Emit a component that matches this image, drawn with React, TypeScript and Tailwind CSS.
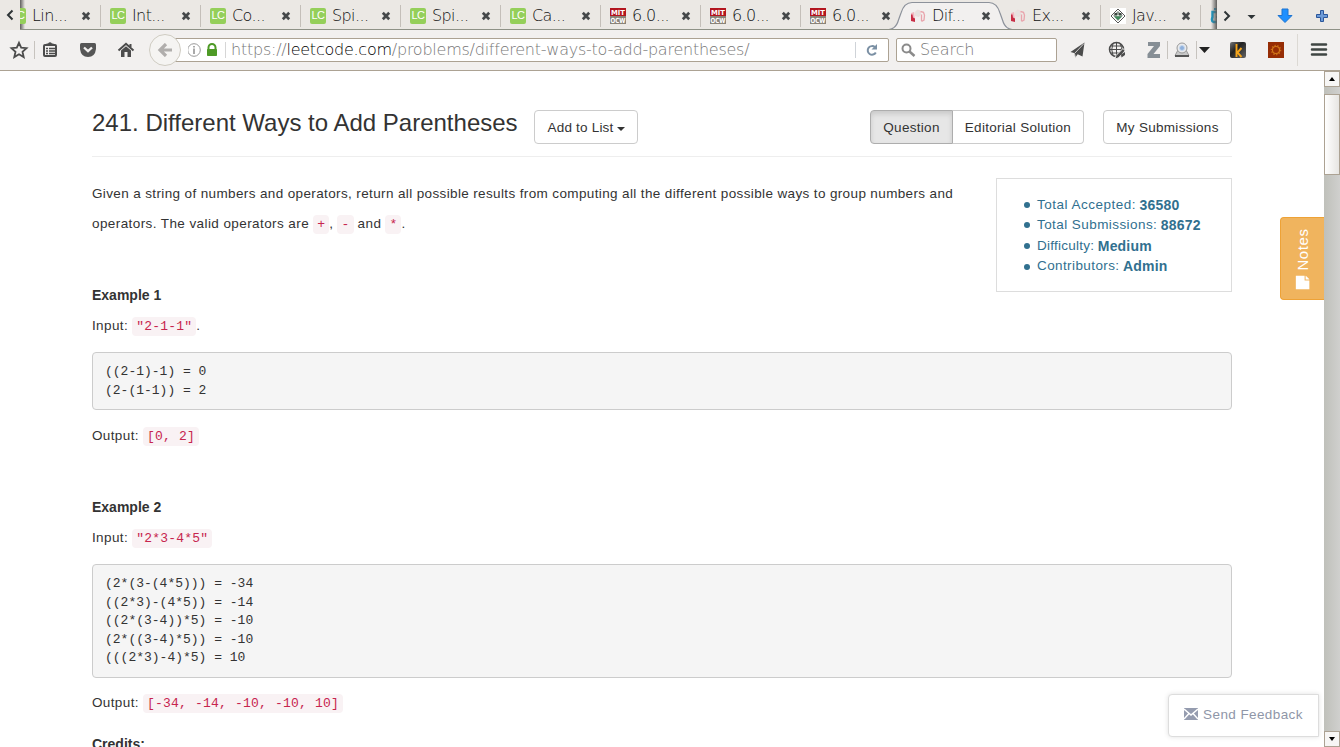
import type { ReactNode } from "react";

type TabKind = "lc" | "mit" | "page" | "java";

const tabs: { kind: TabKind; label: string; active?: boolean; plain?: boolean }[] = [
  { kind: "lc", label: "Lin..." },
  { kind: "lc", label: "Int..." },
  { kind: "lc", label: "Co..." },
  { kind: "lc", label: "Spi..." },
  { kind: "lc", label: "Spi..." },
  { kind: "lc", label: "Ca..." },
  { kind: "mit", label: "6.0..." },
  { kind: "mit", label: "6.0..." },
  { kind: "mit", label: "6.0...", plain: true },
  { kind: "page", label: "Dif...", active: true, plain: true },
  { kind: "page", label: "Ex..." },
  { kind: "java", label: "Jav..." },
];

function Favicon({ kind }: { kind: TabKind }) {
  if (kind === "lc")
    return (
      <span className="flex size-4 shrink-0 items-center justify-center rounded-[2px] bg-[#95cf5a] font-['Liberation_Sans'] text-[11px] leading-none tracking-[-0.5px] text-white">
        LC
      </span>
    );
  if (kind === "mit")
    return (
      <svg className="size-4 shrink-0 overflow-visible font-['DejaVu_Sans'] text-[7px] font-bold tracking-normal" viewBox="0 0 16 16" fill="#fff">
        <path fill="#b3161f" d="M0 0h16v8H0z" />
        <path fill="#8a8378" d="M0 8h16v8H0z" />
        <text x="1" y="6.600" textLength="14" lengthAdjust="spacingAndGlyphs">MIT</text>
        <text x="0.500" y="14.600" textLength="15" lengthAdjust="spacingAndGlyphs">OCW</text>
      </svg>
    );
  if (kind === "page")
    return (
      <svg className="size-4 shrink-0" viewBox="0 0 16 16" fill="none">
        <path d="M1 5l3-1 1 9-3-.5L1 9z" fill="#f0b8c0" />
        <path d="M1 6.500l1.500 0 .5 3 2 1V14l-4-1z" fill="#c92d45" />
        <path d="M5 4.500L7.500 2l2.500 1 .5 3.500-1.500 2-4-1z" fill="#e6e2df" stroke="#eddcdc" />
        <path d="M10.500 3.500l3 .8 1 3-.5 4.700-2.500 1.500M11.500 6.500V13" stroke="#e9a4ac" strokeWidth="1.300" />
      </svg>
    );
  return (
    <svg className="size-4 shrink-0" viewBox="0 0 16 16">
      <path fill="#fff" d="M0 0h16v16H0z" />
      <path d="M8 1L15 8 8 15 1 8z" fill="#fff" stroke="#555" />
      <path d="M8 3l4.800 4.500L8 13 3.200 7.500z" fill="#8f9a93" />
      <path d="M4.500 5h2.500v2H4.500zM9 5h2.500v2H9z" fill="#3c4641" />
      <path d="M4 8.500h8L8 12z" fill="#3d8b5b" />
      <path d="M7 7.500h2" stroke="#cfe6d8" strokeWidth="1.200" />
    </svg>
  );
}

function Close() {
  return (
    <svg className="ml-auto size-[10px] shrink-0" viewBox="0 0 10 10">
      <path d="M1.800 1.800l6.400 6.400M8.200 1.800L1.800 8.200" stroke="#45484a" strokeWidth="2.700" />
    </svg>
  );
}

function TabStrip() {
  return (
    <div className="relative flex h-[30px] bg-[#ebe8e4] font-['DejaVu_Sans'] text-[16px] font-extralight text-[#111]">
      <div className="flex w-5 items-center justify-center">
        <svg width="8" height="12" viewBox="0 0 8 12">
          <path d="M6.500 1.500L2 6l4.500 4.500" fill="none" stroke="#2e3436" strokeWidth="2" />
        </svg>
      </div>
      <div className="relative w-[1197px] overflow-hidden border-b border-[#8e9186]">
        <div className="-ml-5 flex h-[29px] w-[1300px]">
          {tabs.map((t, i) => (
            <div key={i} className="relative flex h-[29px] w-[100px] shrink-0 items-center pt-[2px] pr-[9px] pl-[10px]">
              {t.active && (
                <svg className="absolute top-0 -left-[16px]" width="134" height="30" viewBox="0 0 134 30">
                  <path
                    d="M0 30C9 30 12.500 27 14.500 20L17 13C19 6.500 22 2.500 28 2.500H105C111 2.500 114 6.500 116 13L118.500 20C120.500 27 124 30 133 30"
                    fill="#f2f0ef"
                    stroke="#8d929b"
                    strokeWidth="1.200"
                  />
                </svg>
              )}
              <span className="relative z-10 flex w-full items-center">
                <Favicon kind={t.kind} />
                <span className="ml-[6px] leading-5 tracking-[-0.6px]">{t.label}</span>
                <Close />
              </span>
              {!t.plain && <span className="absolute top-[5px] right-[-1px] h-[22px] w-px bg-[#c4bfb9]" />}
            </div>
          ))}
          <div className="pt-[8px] pl-[10px]">
            <svg width="16" height="16" viewBox="0 0 16 16">
              <path d="M2.500 4h11v10h-10q-2.500-1-1-5z" fill="none" stroke="#159bc9" strokeWidth="2.400" />
              <path d="M6 9h3M4 1h4" stroke="#159bc9" strokeWidth="2" />
            </svg>
          </div>
        </div>
        <div className="absolute top-0 left-0 h-[29px] w-[5px] bg-linear-to-r from-[#5f5e5c] to-transparent" />
        <div className="absolute top-0 right-0 h-[29px] w-[6px] bg-linear-to-l from-[#5f5e5c] to-transparent" />
      </div>
      <div className="flex flex-1 items-center border-b border-[#8e9186]">
        <svg width="123" height="28" viewBox="0 0 123 28">
          <path d="M7.500 10.500L12 15l-4.500 4.500" fill="none" stroke="#2e3436" strokeWidth="2" />
          <path d="M30.500 14h8l-4 4z" fill="#2e3436" />
          <path d="M65 8h6v6.500h4l-7 7-7-7h4z" fill="#1f90ff" stroke="#1f74d0" />
          <path d="M103.500 9.500h3v4h4v3h-4v4h-3v-4h-4v-3h4z" fill="#6d9bd8" stroke="#2b569a" strokeLinejoin="round" />
        </svg>
      </div>
    </div>
  );
}

function Toolbar() {
  return (
    <div className="flex h-[41px] items-center border-b border-[#aca293] bg-[#f2f0ef] font-['DejaVu_Sans'] text-[16px] font-extralight">
      <svg width="149" height="40" viewBox="0 0 149 40" className="shrink-0">
        <path d="M19 12.800l2.200 4.900 5.300.5-4 3.600 1.200 5.300-4.700-2.800-4.700 2.800 1.200-5.300-4-3.600 5.300-.5z" fill="none" stroke="#4c4c4c" strokeWidth="1.800" />
        <path d="M34.500 11v18" stroke="#c7c3be" />
        <rect x="44" y="15" width="12" height="11" rx="1" fill="#f2f0ef" stroke="#4c4c4c" strokeWidth="2" />
        <path d="M46.500 15.500v-2H48q2-2.500 4 0h1.500v2z" fill="#4c4c4c" />
        <path d="M46 18.500h2M49 18.500h6M46 21h2M49 21h6M46 23.500h2M49 23.500h6" stroke="#4c4c4c" strokeWidth="1.300" />
        <path d="M81.500 13h13q1.500 0 1.500 1.500V19q-1 8-8 8t-8-8v-4.500q0-1.500 1.500-1.500z" fill="#565656" />
        <path d="M84 17.500l4 3.700 4-3.700" fill="none" stroke="#f2f0ef" strokeWidth="2.300" />
        <path d="M118.500 20.500l7.500-6.700 7.500 6.700M130.500 14v3" fill="none" stroke="#4c4c4c" strokeWidth="2" />
        <path d="M121 20.500l5-4.300 5 4.300V27h-3.500v-5h-3v5H121z" fill="#4c4c4c" />
      </svg>
      <div className="relative z-10 flex size-8 shrink-0 items-center justify-center rounded-full border border-[#cfccc2] bg-[#f5f4f2]">
        <svg width="16" height="14" viewBox="0 0 16 14">
          <path d="M9 1L3 7l6 6M3.500 7H15" fill="none" stroke="#b0aeac" strokeWidth="3.200" />
        </svg>
      </div>
      <div className="-ml-[8px] flex h-6 w-[716px] shrink-0 items-center rounded-[2px] border border-[#aca293] bg-white pl-[14px]">
        <svg width="46" height="20" viewBox="0 0 46 20" className="shrink-0">
          <circle cx="6" cy="10" r="6.300" fill="none" stroke="#9a9a9a" />
          <path d="M6 8.500V14M6 6v1.500" stroke="#8d8d8d" strokeWidth="1.500" />
          <path d="M20.500 10V7.500a3.500 3.500 0 0 1 7 0V10" fill="none" stroke="#4e9a26" strokeWidth="2" />
          <rect x="19" y="9" width="10" height="7" rx=".8" fill="#4e9a26" />
          <path d="M37.500 2v16" stroke="#d6d6d6" />
        </svg>
        <span className="-ml-[3px] tracking-[-0.24px] whitespace-pre text-[#777]">
          https://<span className="text-black">leetcode.com</span>/problems/different-ways-to-add-parentheses/
        </span>
        <span className="ml-auto h-4 w-px bg-[#cfd3d8]" />
        <svg width="32" height="20" viewBox="0 0 32 20">
          <path d="M19 7.300a4.300 4.300 0 1 0 .8 5.200" fill="none" stroke="#7b90a4" strokeWidth="2" />
          <path d="M21 4v5.500h-5.500z" fill="#7b90a4" />
        </svg>
      </div>
      <div className="ml-[7px] flex h-6 w-[161px] shrink-0 items-center rounded-[2px] border border-[#aca293] bg-white pl-1 text-[#777]">
        <svg width="15" height="15" viewBox="0 0 15 15">
          <circle cx="5.500" cy="5.500" r="4" fill="none" stroke="#8b8b8b" strokeWidth="2" />
          <path d="M8.500 8.500l5 4.500" stroke="#8b8b8b" strokeWidth="2.500" />
        </svg>
        <span className="ml-1 tracking-[-0.1px]">Search</span>
      </div>
      <svg width="283" height="40" viewBox="1057 30 283 40" className="shrink-0">
        <path d="M1070.500 52l14-9.500-2 14-4.800-2.300-2.400 3.300-1.300-4.500z" fill="#4c4c4c" />
        <path d="M1084 43.500l-9.500 10 .8 3.500" stroke="#f2f0ef" strokeWidth=".8" fill="none" />
        <circle cx="1116.500" cy="49.500" r="7" fill="none" stroke="#4c4c4c" strokeWidth="1.500" />
        <path d="M1110.500 46h12M1109.500 49.500h14M1110.500 53h9M1116.500 42.500v14M1113 43.500q-2.500 6 0 12M1120 43.500q2.500 4 1 8" stroke="#4c4c4c" fill="none" />
        <path d="M1123 48.500l-7 7-1 3.500 3.500-1.200 6.500-7z" fill="#4c4c4c" stroke="#f2f0ef" strokeWidth=".9" />
        <path d="M1121 54.500l4-2.500v3l-3.500 2.500z" fill="#4c4c4c" />
        <path d="M1148 42h12v4l-6.500 8h6.500v4h-12.500v-4l6.500-8h-6z" fill="#868e95" />
        <path d="M1167.500 41v18M1196.500 41v18" stroke="#c7c3be" />
        <path d="M1178 50h8l3 5.500h-14z" fill="#c9c9c9" stroke="#888" strokeWidth=".8" />
        <rect x="1175" y="55" width="14" height="2" fill="#555" />
        <circle cx="1182" cy="48" r="5" fill="#e9eaec" stroke="#999" />
        <circle cx="1182" cy="48" r="2.500" fill="#8fb0dc" stroke="#c5d7ee" />
        <path d="M1199 47h11l-5.500 6z" fill="#222" />
        <defs>
          <linearGradient id="keys" x1="0" y1="0" x2="1" y2="1">
            <stop stopColor="#777" />
            <stop offset=".4" stopColor="#222" />
            <stop offset="1" stopColor="#666" />
          </linearGradient>
        </defs>
        <rect x="1230" y="42" width="16" height="16" rx="2" fill="url(#keys)" />
        <path d="M1236.500 44v13M1241.500 48l-4 4.500 4 4.500" fill="none" stroke="#f5a51b" strokeWidth="1.900" />
        <rect x="1268" y="42" width="16" height="16" fill="#962d05" />
        <circle cx="1276" cy="50" r="4.600" fill="none" stroke="#ca6d16" strokeWidth="1.300" strokeDasharray="1.300 1.500" />
        <circle cx="1276" cy="50" r="3.500" fill="none" stroke="#d57a1a" strokeWidth="1.100" />
        <path d="M1297.500 34v32" stroke="#dcd9d4" />
        <path d="M1312 44.500h14M1312 49.500h14M1312 54.500h14" stroke="#3f4543" strokeWidth="2.500" strokeLinecap="round" />
      </svg>
    </div>
  );
}

function Code({ children }: { children: ReactNode }) {
  return (
    <code className="rounded-[4px] bg-[#f9f2f4] px-1 py-[2px] font-['Liberation_Mono'] text-[13px] tracking-[0.2px] text-[#c7254e]">
      {children}
    </code>
  );
}

function Pre({ children }: { children: ReactNode }) {
  return (
    <pre className="mt-[10px] mb-[11px] rounded-[4px] border border-[#ccc] bg-[#f5f5f5] px-[12px] pt-[10px] pb-[9px] font-['Liberation_Mono'] text-[13px] leading-[18.5px] tracking-[0px]">
      {children}
    </pre>
  );
}

function Heading({ children }: { children: ReactNode }) {
  return <p className="pb-[2px] text-[14px] leading-[28px] font-bold tracking-[0px]">{children}</p>;
}

const button = "flex h-[34px] items-center justify-center border border-[#ccc] bg-white pt-[2px] text-[13.5px]";

const stats = [
  { name: "Total Accepted:", value: "36580", tracking: "tracking-[0.5px]" },
  { name: "Total Submissions:", value: "88672", tracking: "tracking-[0.43px]" },
  { name: "Difficulty:", value: "Medium", tracking: "tracking-[0.25px]" },
  { name: "Contributors:", value: "Admin", tracking: "tracking-[0.4px]" },
];

function Problem() {
  return (
    <main className="mx-[92px] w-[1140px] pt-[39px]">
      <header className="flex h-[47px] items-start border-b border-[#eee]">
        <h1 className="mt-[-3px] w-[442px] text-[24px] leading-[32px] tracking-[0px] whitespace-nowrap">241. Different Ways to Add Parentheses</h1>
        <button className={`${button} w-[104px] rounded-[4px] tracking-[0.2px]`}>
          <span>Add to List</span>
          <span className="mt-px ml-[3px] border-x-4 border-t-4 border-x-transparent border-t-[#333]" />
        </button>
        <div className="ml-auto flex">
          <button className="flex h-[34px] w-[83px] items-center justify-center rounded-l-[4px] border border-[#adadad] bg-[#e6e6e6] pt-[2px] text-[13.5px] tracking-[0.3px] shadow-[inset_0_3px_5px_rgba(0,0,0,0.125)]">
            Question
          </button>
          <button className={`${button} w-[131px] rounded-r-[4px] border-l-0 tracking-[0.28px]`}>Editorial Solution</button>
        </div>
        <button className={`${button} ml-[19px] w-[129px] rounded-[4px] tracking-[0.3px]`}>My Submissions</button>
      </header>

      <div className="flex h-[124px] justify-between pt-[21px]">
        <p className="mt-px w-[880px] whitespace-nowrap">
          Given a string of numbers and operators, return all possible results from computing all the different possible ways to group numbers and
          <br />
          <span className="tracking-[0.41px]">operators. The valid operators are </span>
          <Code>+</Code>, <Code>-</Code> and <Code>*</Code>.
        </p>
        <ul className="h-[114px] w-[236px] border border-[#ddd] pt-[15.5px] pl-[27px] leading-[20.6px] text-[#31708f]">
          {stats.map((s) => (
            <li key={s.name} className="flex items-center">
              <span className="mr-[7px] size-[6px] rounded-full bg-[#31708f]" />
              <span className={s.tracking}>{s.name}</span>
              <b className="ml-[3.500px] text-[14px] tracking-[0.2px]">{s.value}</b>
            </li>
          ))}
        </ul>
      </div>

      <section>
        <Heading>Example 1</Heading>
        <p>
          Input: <Code>"2-1-1"</Code>.
        </p>
        <Pre>{"((2-1)-1) = 0\n(2-(1-1)) = 2"}</Pre>
        <p>
          Output: <Code>[0, 2]</Code>
        </p>
      </section>
      <section className="mt-[41px]">
        <Heading>Example 2</Heading>
        <p>
          Input: <Code>"2*3-4*5"</Code>
        </p>
        <Pre>{"(2*(3-(4*5))) = -34\n((2*3)-(4*5)) = -14\n((2*(3-4))*5) = -10\n(2*((3-4)*5)) = -10\n(((2*3)-4)*5) = 10"}</Pre>
        <p className="-mt-[0.500px]">
          Output: <Code>[-34, -14, -10, -10, 10]</Code>
        </p>
        <div className="mt-[11px]">
          <Heading>Credits:</Heading>
        </div>
      </section>
    </main>
  );
}

function Scrollbar() {
  return (
    <div className="flex w-4 shrink-0 flex-col bg-linear-to-r from-[#bfc0ba] to-[#d0d0ce]">
      <div className="flex h-4 items-center justify-center border border-[#aca293] bg-[#f7f6f5]">
        <span className="border-x-[3.5px] border-b-4 border-x-transparent border-b-black" />
      </div>
      <div className="mt-[7px] h-[81px] border border-[#aca293] bg-linear-to-r from-white to-[#e7e5e2]" />
      <div className="mt-auto flex h-4 items-center justify-center border border-[#aca293] bg-[#f7f6f5]">
        <span className="border-x-[3.5px] border-t-4 border-x-transparent border-t-black" />
      </div>
    </div>
  );
}

export default function App() {
  return (
    <div className="flex h-[747px] w-[1340px] flex-col overflow-hidden bg-white">
      <TabStrip />
      <Toolbar />
      <div className="relative flex min-h-0 flex-1 font-['Liberation_Sans'] text-[13.5px] leading-[30px] tracking-[0.37px] text-[#333]">
        <div className="w-[1324px] shrink-0 overflow-hidden">
          <Problem />
        </div>
        <Scrollbar />
        <div className="absolute top-[146px] left-[1280px] flex h-[83px] w-[44px] items-center justify-center rounded-l-[4px] border border-r-0 border-[#eea236] bg-[#f0b45e]">
          <span className="flex -rotate-90 items-center gap-[5px] text-[15px] tracking-[0.6px] whitespace-nowrap text-white">
            <svg width="14" height="14" viewBox="0 0 14 14" fill="#fff" className="rotate-90">
              <path d="M0 0h9v5h5v9H0z" />
              <path d="M10 0l4 4h-4z" />
            </svg>
            Notes
          </span>
        </div>
        <div className="absolute top-[623px] left-[1168px] flex h-[43px] w-[151px] items-center justify-center rounded-l-[4px] border border-[#ddd] bg-white pb-[2px] text-[#8f96a8] shadow-[0_0_5px_rgba(0,0,0,0.12)]">
          <svg width="14" height="12" viewBox="0 0 14 12" className="mr-[5px] mb-[2px]">
            <path d="M0 0h14v12H0z" fill="#959caf" />
            <path d="M0 1l7 6 7-6M0 11l5-5.500M14 11L9 5.500" fill="none" stroke="#fff" strokeWidth="1.500" />
          </svg>
          <span className="tracking-[0.4px]">Send Feedback</span>
        </div>
      </div>
    </div>
  );
}
